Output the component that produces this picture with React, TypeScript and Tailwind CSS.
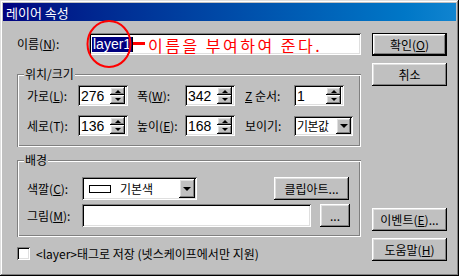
import React from "react";

const raised =
  "shadow-[inset_-1px_-1px_#000,inset_1px_1px_#fff,inset_-2px_-2px_#808080,inset_2px_2px_#dfdfdf]";
const sunken =
  "shadow-[inset_1px_1px_#808080,inset_-1px_-1px_#fff,inset_2px_2px_#000,inset_-2px_-2px_#dfdfdf]";
const etched =
  "shadow-[inset_1px_1px_#808080,inset_-1px_-1px_#fff,inset_2px_2px_#fff,inset_-2px_-2px_#808080]";

function UpTri() {
  return <span className="w-0 h-0 border-x-[3px] border-x-transparent border-b-[3px] border-b-black" />;
}
function DownTri() {
  return <span className="w-0 h-0 border-x-[3px] border-x-transparent border-t-[3px] border-t-black" />;
}
function BigDown() {
  return <span className="w-0 h-0 border-x-[4px] border-x-transparent border-t-[4px] border-t-black" />;
}

function Spin({ value }: { value: string }) {
  return (
    <div className={`w-[50px] h-[21px] bg-white ${sunken} flex items-center justify-between pl-[3px] pr-[3px]`}>
      <span className="font-['Liberation_Sans'] text-[14px] leading-none">{value}</span>
      <div className="flex flex-col w-[15px]">
        <div className={`h-[8px] bg-[#c0c0c0] ${raised} flex items-center justify-center`}>
          <UpTri />
        </div>
        <div className={`h-[9px] bg-[#c0c0c0] ${raised} flex items-center justify-center`}>
          <DownTri />
        </div>
      </div>
    </div>
  );
}

function Btn({ children, className = "" }: { children: React.ReactNode; className?: string }) {
  return (
    <div
      className={`w-[75px] h-[23px] bg-[#c0c0c0] ${raised} flex items-center justify-center leading-none ${className}`}
    >
      {children}
    </div>
  );
}

export default function App() {
  return (
    <div
      className="relative w-[459px] h-[276px] bg-[#c0c0c0] overflow-hidden text-[12px] text-black font-['Noto_Sans_CJK_KR',sans-serif] shadow-[inset_-1px_-1px_#000,inset_1px_1px_#dfdfdf,inset_-2px_-2px_#808080,inset_2px_2px_#fff]"
    >
      {/* title bar */}
      <div className="mx-[3px] mt-[3px] h-[18px] bg-gradient-to-r from-[#000080] to-[#1084d0] text-white text-[13px] pl-[3px] flex items-center leading-none">
        레이어 속성
      </div>

      <div className="flex pl-[17px] pt-[12px]">
        {/* left column */}
        <div className="w-[344px] flex flex-col">
          {/* name row */}
          <div className="flex items-center h-[22px]">
            <span className="w-[72px] leading-none">
              이름(<u>N</u>):
            </span>
            <div className={`w-[272px] h-[22px] bg-white ${sunken} flex items-center pl-[3px]`}>
              <span className="bg-[#000080] text-white font-['Liberation_Sans'] text-[14px] leading-[15px] px-[1px]">
                layer1
              </span>
              <span className="w-[1px] h-[15px] bg-black" />
            </div>
          </div>

          {/* group: 위치/크기 */}
          <div className={`relative mt-[19px] h-[73px] ${etched} pl-[10px] pt-[11px]`}>
            <span className="absolute -top-[8px] left-[7px] px-[1px] bg-[#c0c0c0] leading-[15px]">
              위치/크기
            </span>
            <div className="flex items-center h-[21px]">
              <span className="w-[51px] leading-none">
                가로(<u>L</u>):
              </span>
              <Spin value="276" />
              <span className="ml-[9px] w-[48px] leading-none">
                폭(<u>W</u>):
              </span>
              <Spin value="342" />
              <span className="ml-[10px] w-[49px] leading-none">
                <u>Z</u> 순서:
              </span>
              <Spin value="1" />
            </div>
            <div className="flex items-center h-[21px] mt-[9px]">
              <span className="w-[51px] leading-none">세로(T):</span>
              <Spin value="136" />
              <span className="ml-[9px] w-[48px] leading-none">
                높이(<u>E</u>):
              </span>
              <Spin value="168" />
              <span className="ml-[10px] w-[49px] leading-none">보이기:</span>
              <div className={`w-[59px] h-[20px] bg-white ${sunken} flex items-center justify-between pl-[3px] pr-[2px]`}>
                <span className="leading-none text-[12px] whitespace-nowrap tracking-[-0.5px]">기본값</span>
                <div className={`w-[15px] h-[16px] shrink-0 bg-[#c0c0c0] ${raised} flex items-center justify-center`}>
                  <BigDown />
                </div>
              </div>
            </div>
          </div>

          {/* group: 배경 */}
          <div className={`relative mt-[13px] h-[77px] ${etched} pl-[10px] pt-[17px]`}>
            <span className="absolute -top-[8px] left-[7px] px-[1px] bg-[#c0c0c0] leading-[15px]">배경</span>
            <div className="flex items-center h-[23px]">
              <span className="w-[55px] leading-none">
                색깔(<u>C</u>):
              </span>
              <div className={`w-[115px] h-[23px] bg-white ${sunken} flex items-center justify-between pl-[7px] pr-[2px]`}>
                <div className="flex items-center gap-[9px]">
                  <span className="w-[22px] h-[8px] border border-black bg-white" />
                  <span className="leading-none">기본색</span>
                </div>
                <div className={`w-[16px] h-[19px] bg-[#c0c0c0] ${raised} flex items-center justify-center`}>
                  <BigDown />
                </div>
              </div>
              <Btn className="ml-[77px] h-[21px] self-start">클립아트...</Btn>
            </div>
            <div className="flex items-center h-[23px] mt-[4px]">
              <span className="w-[55px] leading-none">
                그림(<u>M</u>):
              </span>
              <div className={`w-[229px] h-[23px] bg-white ${sunken}`} />
              <div className={`ml-[9px] w-[30px] h-[23px] bg-[#c0c0c0] ${raised} flex items-center justify-center leading-none`}>
                ...
              </div>
            </div>
          </div>

          {/* checkbox */}
          <div className="flex items-center mt-[10px] h-[13px]">
            <span className={`w-[13px] h-[13px] bg-white ${sunken}`} />
            <span className="ml-[6px] leading-none">&lt;layer&gt;태그로 저장 (넷스케이프에서만 지원)</span>
          </div>
        </div>

        {/* right column */}
        <div className="ml-[11px] flex flex-col">
          <div className="w-[75px] h-[23px] border border-black bg-[#c0c0c0] flex">
            <div className={`flex-1 ${raised} flex items-center justify-center leading-none`}>
              확인(<u>O</u>)
            </div>
          </div>
          <Btn className="mt-[7px]">취소</Btn>
          <Btn className="mt-[122px]">
            이벤트(<u>E</u>)...
          </Btn>
          <Btn className="mt-[7px]">
            도움말(<u>H</u>)
          </Btn>
        </div>
      </div>

      {/* annotation overlay */}
      <svg className="absolute left-[85px] top-[19px]" width="50" height="52" viewBox="0 0 50 52">
        <ellipse cx="24" cy="25" rx="21.5" ry="23" fill="none" stroke="#ff0000" strokeWidth="2" />
      </svg>
      <div className="absolute left-[133px] top-[42px] w-[12px] h-[3px] bg-[#ff0000]" />
      <div className="absolute left-[148px] top-[35px] text-[#ff0000] text-[16px] leading-[20px] tracking-[2.5px] whitespace-nowrap">
        이름을 부여하여 준다.
      </div>
    </div>
  );
}
